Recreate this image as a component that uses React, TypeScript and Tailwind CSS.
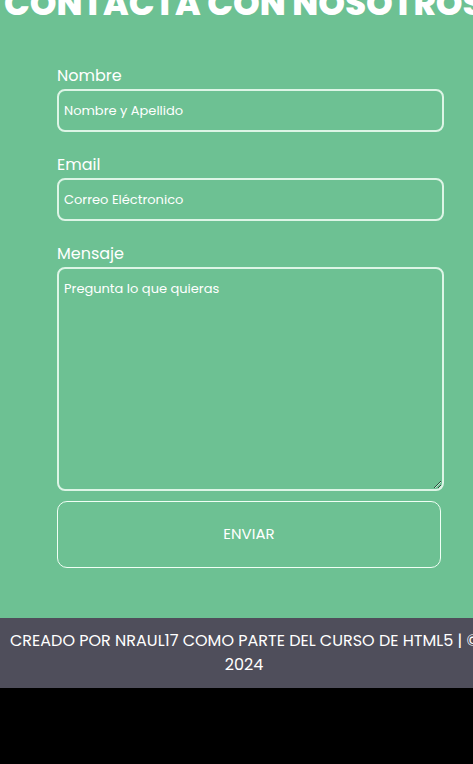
export default function App() {
  const font = { fontFamily: "Poppins, Inter, 'Noto Sans', sans-serif" };
  return (
    <div className="min-h-screen w-[473px] overflow-hidden bg-black" style={font}>
      <div className="w-[488px] bg-[#6dc193]">
        <h1 className="-mt-[17px] whitespace-nowrap pl-[4px] text-[34px] font-extrabold leading-[40px] text-white">
          CONTACTA CON NOSOTROS
        </h1>

        <form className="flex flex-col pt-[41px] pl-[57px] pr-[44px] pb-[50px]" onSubmit={(e) => e.preventDefault()}>
          <label className="text-[16px] leading-6 text-white">Nombre</label>
          <input
            className="mt-[1px] h-[43px] w-[387px] rounded-lg border-2 border-[#ddf5e6] bg-transparent px-[5px] text-[13px] text-white outline-none placeholder:text-white"
            placeholder="Nombre y Apellido"
          />

          <label className="mt-[21px] text-[16px] leading-6 text-white">Email</label>
          <input
            className="mt-[1px] h-[43px] w-[387px] rounded-lg border-2 border-[#ddf5e6] bg-transparent px-[5px] text-[13px] text-white outline-none placeholder:text-white"
            placeholder="Correo Eléctronico"
          />

          <label className="mt-[21px] text-[16px] leading-6 text-white">Mensaje</label>
          <textarea
            className="mt-[1px] h-[224px] w-[387px] rounded-lg border-2 border-[#ddf5e6] bg-transparent px-[5px] py-[10px] text-[13px] text-white outline-none placeholder:text-white"
            placeholder="Pregunta lo que quieras"
          />

          <button
            type="submit"
            className="mt-[10px] h-[67px] w-[384px] rounded-[10px] border border-[#f0fff5] text-[15px] font-normal text-white"
          >
            ENVIAR
          </button>
        </form>
      </div>

      <footer className="w-[488px] bg-[#4f4e5b] py-[11px] text-center text-[16px] leading-6 text-white">
        <p className="whitespace-nowrap pl-[10px] text-left">CREADO POR NRAUL17 COMO PARTE DEL CURSO DE HTML5 | © </p>
        <p>2024</p>
      </footer>
    </div>
  );
}
